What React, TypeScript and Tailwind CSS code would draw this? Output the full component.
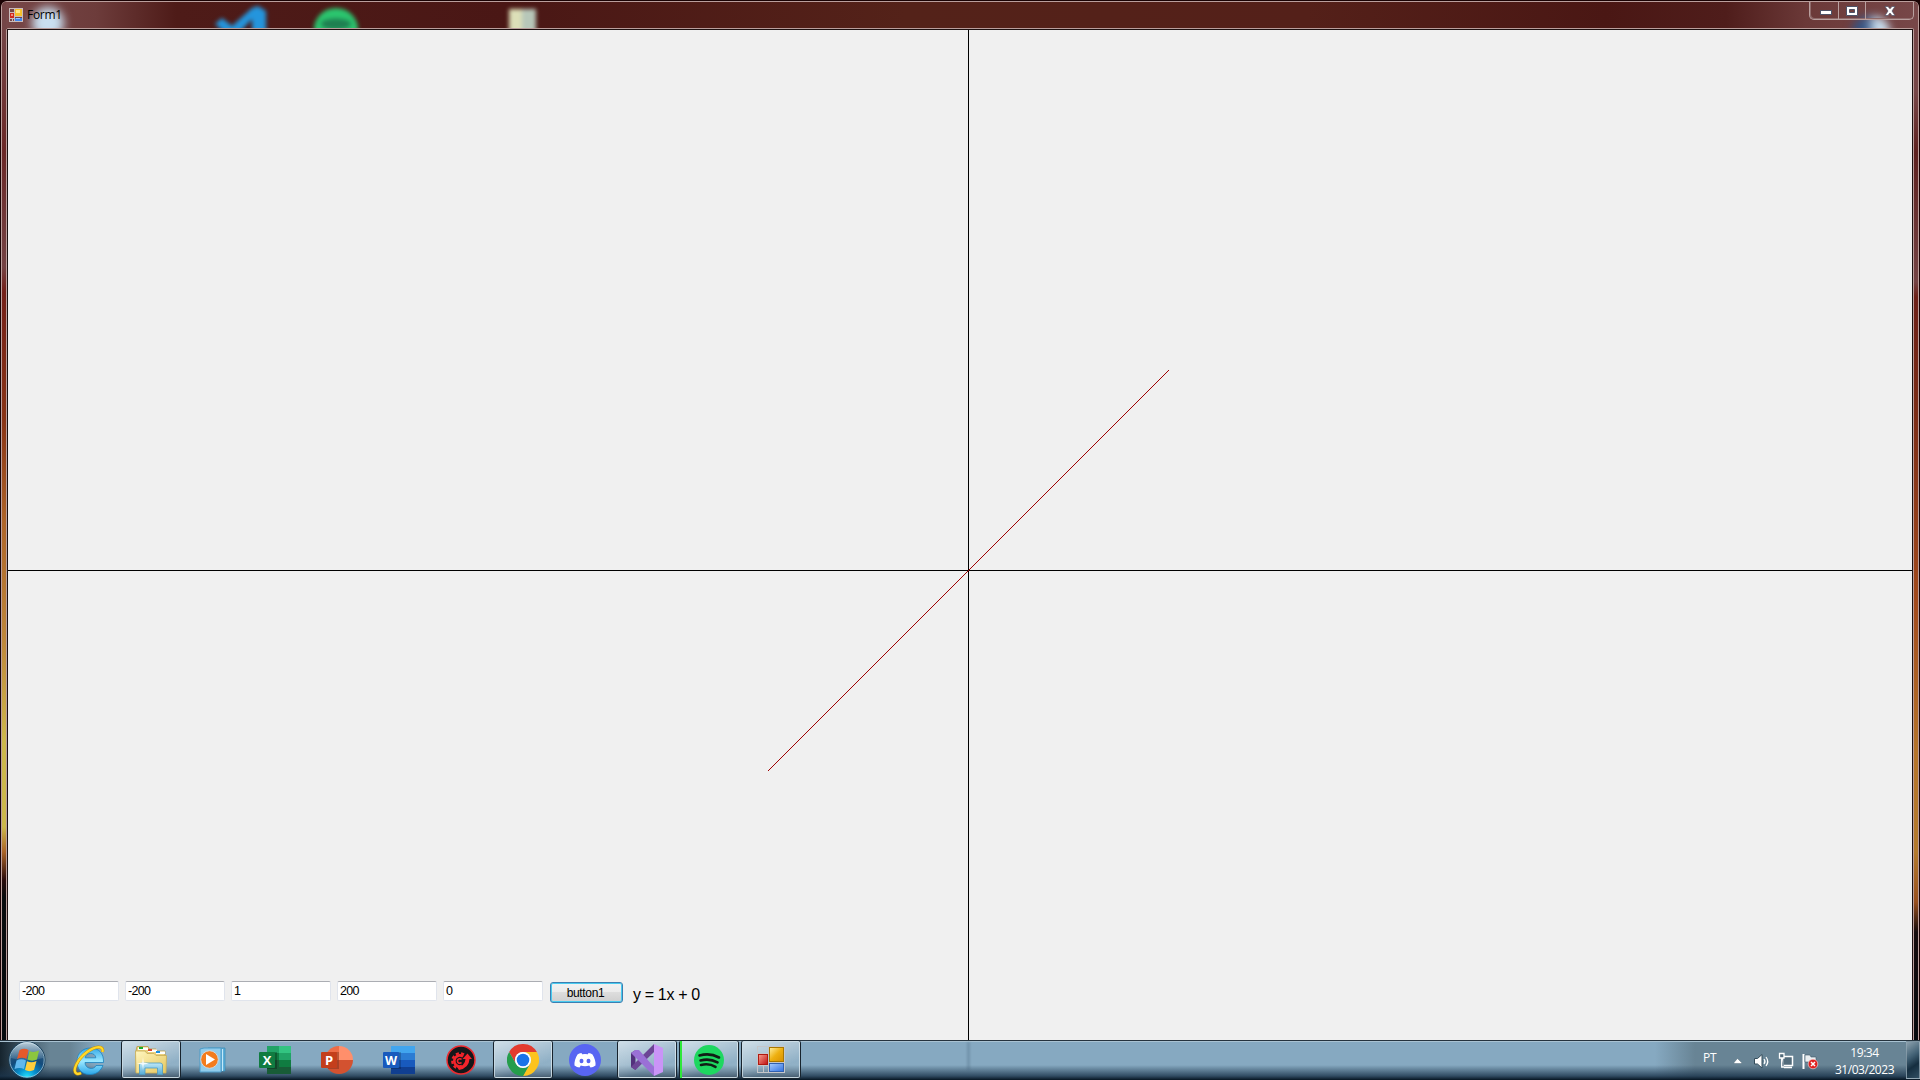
import React from "react";

const S = { fill: "none" } as const;

function Box({ v }: { v: string }) {
  return (
    <div className="h-5 w-[100px] rounded-[2px] border border-[#e0e4ec] border-t-[#abadb3] bg-white pl-[2px] text-[12.5px] leading-[19px] tracking-[-0.65px]">
      <span>{v}</span>
    </div>
  );
}

function FormIcon({ s }: { s: number }) {
  return (
    <svg width={s} height={s} viewBox="0 0 28 28" shapeRendering="crispEdges">
      <defs>
        <linearGradient id="fy" x2="1" y2="1"><stop stopColor="#fff0a0" /><stop offset=".5" stopColor="#eeb010" /><stop offset="1" stopColor="#d89000" /></linearGradient>
        <linearGradient id="fr" x2="1" y2="1"><stop stopColor="#f8a090" /><stop offset="1" stopColor="#c01010" /></linearGradient>
        <linearGradient id="fb" x2="1" y2="1"><stop stopColor="#a8ccff" /><stop offset="1" stopColor="#3070e0" /></linearGradient>
      </defs>
      <path d="M.5 .5H27.5V26.5H.5ZM11.5 0V27M0 7.5H11M0 19.5H11M6 19V27M11 16.5H28" {...S} stroke="#c4c6ca" />
      <rect x="12.5" y="1.5" width="14" height="14" fill="url(#fy)" stroke="#a87800" />
      <rect x="1.5" y="8.5" width="9" height="10" fill="url(#fr)" stroke="#b01810" />
      <rect x="12.5" y="17.5" width="14" height="8" fill="url(#fb)" stroke="#3060b0" />
    </svg>
  );
}

function SmallFormIcon() {
  return (
    <svg width="14" height="14" viewBox="0 0 14 14" shapeRendering="crispEdges">
      <path d="M.5 .5H13.5V13.5H.5ZM5.500 0V14M0 4.500H5M0 10.500H5M3.500 11V14M5 8.500H14" {...S} stroke="#c8bcbc" />
      <rect x="6" y="1" width="7" height="7" fill="#f5c02c" /><rect x="7" y="2" width="4" height="3" fill="#ffe58a" />
      <rect x="1" y="5" width="4" height="5" fill="#d0281c" /><rect x="2" y="6" width="2" height="2" fill="#f09080" />
      <rect x="6" y="10" width="7" height="3" fill="#3f86ec" /><rect x="7" y="10" width="4" height="1" fill="#9cc6ff" />
    </svg>
  );
}

function Start() {
  return (
    <svg width="38" height="38" viewBox="0 0 38 38">
      <defs>
        <radialGradient id="orb" cx=".5" cy=".98" r=".9"><stop stopColor="#25e5ff" /><stop offset=".28" stopColor="#0791cf" /><stop offset=".6" stopColor="#134b7c" /><stop offset="1" stopColor="#385f7c" /></radialGradient>
        <linearGradient id="orbg" x2="0" y2="1"><stop stopColor="#e8f4fa" stopOpacity=".75" /><stop offset="1" stopColor="#a8c8dc" stopOpacity=".15" /></linearGradient>
      </defs>
      <circle cx="19" cy="19" r="18" fill="url(#orb)" stroke="#173e5a" />
      <circle cx="19" cy="19" r="17.2" {...S} stroke="#a9cbdc" strokeOpacity=".75" />
      <path d="M3 17A16 16 0 0 1 35 17Q19 22 3 17Z" fill="url(#orbg)" />
      <path d="M11.500 9.200Q16 6.500 20.500 9L18.500 18Q14 15.500 9 18Z" fill="#e6592a" />
      <path d="M21.500 10Q25.500 12 31 9.500L29 18.500Q24 20.800 19.500 18.500Z" fill="#8cc63f" />
      <path d="M8.500 19.500Q13.500 17 18 19.500L16 28Q11.500 25.800 6.500 28Z" fill="#62b8ee" />
      <path d="M19 20.300Q23.500 22.500 28.500 20L26 29Q21.500 31.300 17 29Z" fill="#ffce3c" />
    </svg>
  );
}

function IE() {
  return (
    <svg width="32" height="32" viewBox="0 0 32 32">
      <defs><linearGradient id="ie" x2="0" y2="1"><stop stopColor="#36a9e6" /><stop offset=".5" stopColor="#9be8ff" /><stop offset="1" stopColor="#2aa5e8" /></linearGradient></defs>
      <path d="M30.500 18.500H12C12 25 21 26.500 23 21.500H30C27 29 21 30.500 16.500 30.500C8.500 30.500 4 25 4 17.500C4 9 10 4 17.500 4C25.500 4 31 9 30.500 18.500ZM12.200 13.800H22.800C22.500 8 12.800 8 12.200 13.800Z" fill="url(#ie)" stroke="#1d83bf" strokeWidth=".8" />
      <path d="M29.500 8C31 1 22 2 14 8C4 15.500 -1 27 3.500 29.500Q5.500 30.500 8 29" {...S} stroke="#c28d08" strokeWidth="3.200" />
      <path d="M29.500 8C31 1 22 2 14 8C4 15.500 -1 27 3.500 29.500Q5.500 30.500 8 29" {...S} stroke="#ffd829" strokeWidth="2.200" />
    </svg>
  );
}

function Explorer() {
  return (
    <svg width="34" height="30" viewBox="0 0 34 30">
      <defs>
        <linearGradient id="fo" x2="1" y2="1"><stop stopColor="#fff6c0" /><stop offset="1" stopColor="#e6c75e" /></linearGradient>
        <linearGradient id="st" x2="0" y2="1"><stop stopColor="#bfe8f8" /><stop offset="1" stopColor="#56acd5" /></linearGradient>
      </defs>
      <path d="M2 6L3 1.500H14L15 4H22L23 6H31V27H2Z" fill="#e8cf7c" stroke="#b99b45" strokeWidth=".8" />
      <path d="M4 2.500H14V5H4ZM14 4.500H23V7H14ZM22 6.500H31V9H22Z" fill="#fff" />
      <path d="M5 2H9V4H5Z" fill="#19ad28" /><path d="M14 4H18V6H14Z" fill="#d8452c" /><path d="M22 6H26V8H22Z" fill="#1b8fe0" />
      <path d="M1.500 6H11L13 8.500H20L22 10.500H32.500L32 28H2Z" fill="url(#fo)" stroke="#c9ad55" strokeWidth=".8" />
      <path d="M5.500 29.500V20Q5.500 18 8 18H26Q28.500 18 28.500 20V29.500H23.500V23H11V29.500Z" fill="url(#st)" stroke="#4c9cc4" strokeWidth=".8" />
      <path d="M9 12L9.700 17.500L15 18.500L9.700 19.500L9 25L8.300 19.500L3 18.500L8.300 17.500Z" fill="#fff" opacity=".9" />
    </svg>
  );
}

function Media() {
  return (
    <svg width="28" height="26" viewBox="0 0 28 26">
      <path d="M9 1H26V24H9Z" fill="#5eafd9" stroke="#3589b5" strokeWidth=".7" />
      <path d="M5 1H22V25H1V2Z" fill="#91cceb" stroke="#4c9cc9" /><path d="M23.500 2V24" stroke="#c4e9f9" />
      <circle cx="10.500" cy="12.500" r="8.800" fill="#f37c1d" stroke="#d1d9dd" /><path d="M7 7L16 12.500L7 18Z" fill="#fff" />
    </svg>
  );
}

function Excel() {
  return (
    <svg width="32" height="28" viewBox="0 0 32 28">
      <path d="M8 0H20V8H8Z" fill="#21a366" /><path d="M20 0H32V7H20Z" fill="#33c481" /><path d="M8 7H20V14H8Z" fill="#107c41" /><path d="M20 7H32V14H20Z" fill="#21a366" /><path d="M8 14H32V28H8Z" fill="#185c37" /><path d="M20 14H32V21H20Z" fill="#107c41" />
      <path d="M8 6H18V23H8Z" fill="#000" opacity=".25" /><rect y="6" width="16" height="16" rx="1" fill="#107c41" />
      <text x="8" y="18.700" textAnchor="middle" fontFamily="Open Sans" fontWeight="700" fontSize="13" fill="#fff">X</text>
    </svg>
  );
}

function Ppt() {
  return (
    <svg width="32" height="28" viewBox="0 0 32 28">
      <path d="M18 0A14 14 0 0 0 4 14H18Z" fill="#ed6c47" /><path d="M18 0A14 14 0 0 1 32 14H18Z" fill="#ff8f6b" /><path d="M4 14A14 14 0 0 0 32 14Z" fill="#d35230" />
      <path d="M7 6H18V23H7Z" fill="#000" opacity=".2" /><rect y="6" width="16" height="16" rx="1" fill="#c43e1c" />
      <text x="8" y="18.700" textAnchor="middle" fontFamily="Open Sans" fontWeight="700" fontSize="13" fill="#fff">P</text>
    </svg>
  );
}

function Word() {
  return (
    <svg width="32" height="28" viewBox="0 0 32 28">
      <path d="M8 0H32V7H8Z" fill="#41a5ee" /><path d="M8 7H32V14H8Z" fill="#2b7cd3" /><path d="M8 14H32V21H8Z" fill="#185abd" /><path d="M8 21H32V28H8Z" fill="#103f91" />
      <path d="M8 6H18V23H8Z" fill="#000" opacity=".2" /><rect y="6" width="16" height="16" rx="1" fill="#185abd" />
      <text x="8" y="18.500" textAnchor="middle" fontFamily="Open Sans" fontWeight="700" fontSize="12.500" fill="#fff">W</text>
    </svg>
  );
}

function Driver() {
  return (
    <svg width="30" height="30" viewBox="0 0 30 30">
      <circle cx="15" cy="15" r="14" fill="#151719" stroke="#ee2b30" strokeWidth="1.500" />
      <path d="M17 11.500A5.500 5.500 0 1 0 16 21" {...S} stroke="#f4242b" strokeWidth="2.600" />
      <path d="M18 9.500A7.700 7.700 0 1 0 12 23.500" {...S} stroke="#f4242b" strokeWidth="2.200" strokeDasharray="3.100 2.200" />
      <path d="M15.500 14.500A2.300 2.300 0 1 0 15.500 17.500" {...S} stroke="#f4242b" strokeWidth="1.600" />
      <path d="M11 22Q19 21 19.500 14H16.500L21.500 8.500L26 14H23.500Q23 23 13 25Z" fill="#f4242b" />
    </svg>
  );
}

function Chrome() {
  return (
    <svg width="32" height="32" viewBox="0 0 32 32">
      <path d="M2.140 8A16 16 0 0 1 29.860 8H16A8 8 0 0 0 9.070 20Z" fill="#e33b2e" />
      <path d="M29.860 8A16 16 0 0 1 16 32L22.930 20A8 8 0 0 0 16 8Z" fill="#fcc31e" />
      <path d="M16 32A16 16 0 0 1 2.140 8L9.070 20A8 8 0 0 0 22.930 20Z" fill="#259d4b" />
      <circle cx="16" cy="16" r="8" fill="#fff" /><circle cx="16" cy="16" r="6.300" fill="#1a73e8" />
    </svg>
  );
}

function Discord() {
  return (
    <svg width="32" height="32" viewBox="0 0 32 32">
      <circle cx="16" cy="16" r="16" fill="#5865f2" />
      <path d="M12.500 9Q10 9.400 8.500 10.400Q5 16 5.500 21.500Q8 23.300 10.500 23.500L11.800 21.500Q16 22.800 20.200 21.500L21.500 23.500Q24 23.300 26.500 21.500Q27 16 23.500 10.400Q22 9.400 19.500 9L18.900 10.200Q16 9.800 13.100 10.200Z" fill="#fff" />
      <ellipse cx="12.500" cy="17" rx="2" ry="2.200" fill="#5865f2" /><ellipse cx="19.500" cy="17" rx="2" ry="2.200" fill="#5865f2" />
    </svg>
  );
}

function VS() {
  return (
    <svg width="33" height="32" viewBox="0 0 33 32">
      <path d="M0 9L4.500 6V26L0 23Z" fill="#52307c" />
      <path d="M0 23L4.500 26L23 8V0Z" fill="#6c4595" />
      <path d="M0 9L4.500 6L8 6L23 23V32Z" fill="#9a70d6" />
      <path d="M23 0L32 4V28L23 32Z" fill="#ca94f7" />
    </svg>
  );
}

function Spotify() {
  return (
    <svg width="30" height="30" viewBox="0 0 30 30">
      <circle cx="15" cy="15" r="15" fill="#1ed760" />
      <path d="M5.500 10.500Q16 7.500 25 12.500M6.500 15.500Q15.500 13 23.500 17.300M7 20Q15 18 21.500 21.800" {...S} stroke="#111c15" strokeWidth="2.600" strokeLinecap="round" />
    </svg>
  );
}

function Task({ active, green, children }: { active?: boolean; green?: boolean; children: React.ReactNode }) {
  return (
    <div className="relative flex h-10 w-[62px] shrink-0 items-center justify-center">
      {active && (
        <div className="absolute left-0 top-0 h-[39px] w-[60px] rounded-[3px] border border-[#17232d]">
          <div className="h-full rounded-[2px] border border-[#d3e2ea]/80 bg-[linear-gradient(160deg,#e0ebf1cc_0%,#c5d6e199_40%,#a4bfd055_70%,#ffffff25_100%)]" />
          {green && <div className="absolute left-0 top-0 h-full w-[2px] bg-[#2ee83a]" />}
        </div>
      )}
      <div className="relative -left-px">{children}</div>
    </div>
  );
}

export default function App() {
  return (
    <div className="flex h-[1080px] w-[1920px] flex-col overflow-hidden bg-black font-['Liberation_Sans',sans-serif] text-black">
      <div className="relative flex h-[1040px] flex-col overflow-hidden bg-[#1a0203] px-px pt-px">
        <div className="relative flex h-[1045px] shrink-0 flex-col rounded-t-[6px] border border-b-0 border-[#ba9e9c] bg-[#4a1816]">
          <div className="flex h-[1040px]">
            <div className="w-1 rounded-tl-[5px] bg-[linear-gradient(180deg,#744546_0px,#744546_30px,#6b2827_150px,#744344_265px,#742019_290px,#8a3516_420px,#ae6529_520px,#bf883b_640px,#cdb84b_740px,#cdb84b_825px,#aa6428_850px,#2a0c0c_878px,#080c0e_895px,#05090c_1040px)]" />
            <div className="flex w-[1908px] flex-col">
              <div className="relative flex h-[26px] items-start overflow-hidden bg-[linear-gradient(90deg,#774748_0px,#6d3c3b_90px,#4e1b18_170px,#4a1715_500px,#542219_900px,#542019_1300px,#4a1714_1600px,#4f1d1b_1720px,#6b3938_1800px,#774748_1908px)]">
                <div className="absolute left-[26px] top-[5px] h-8 w-8 rounded-full bg-[#cadff0] blur-[5px]" />
                <svg className="absolute left-[206px] top-0 blur-[2px]" width="170" height="30" viewBox="0 0 170 30">
                  <path d="M3 22L10 16L20 24L40 6L46 4L54 9V30H12Z" fill="#2495dd" /><path d="M28 30L40 17V30Z" fill="#4a1816" />
                  <ellipse cx="124" cy="27" rx="22" ry="21" fill="#2bc56e" /><ellipse cx="124" cy="22" rx="15" ry="5.500" fill="#1f7f51" />
                </svg>
                <div className="absolute left-[503px] top-[7px] h-8 w-[27px] bg-[linear-gradient(90deg,#dcdfb8_50%,#b7c7b9_50%)] blur-[2px]" />
                <div className="absolute left-[1846px] top-[14px] h-8 w-[38px] rounded-full bg-[linear-gradient(90deg,#365281_35%,#cadff0_65%)] blur-[4px]" />
                <div className="relative left-[3px] top-[6px]"><SmallFormIcon /></div>
                <div className="relative left-[7px] top-[4px] font-['Open_Sans',sans-serif] text-[12px] leading-[17px] tracking-[-0.3px]">Form1</div>
                <div className="absolute left-[1803px] top-0 flex h-[18px] w-[105px] rounded-b-[5px] border border-t-0 border-[#b9a09f] shadow-[inset_1px_-1px_0_#8e6a6a] [&>div]:flex [&>div]:items-center [&>div]:justify-center">
                  <div className="w-[29px] border-r border-[#b9a09f]"><svg className="relative left-[2px] top-px" width="12" height="6"><rect x=".5" y="1.500" width="11" height="4" fill="#fff" stroke="#4e5267" /></svg></div>
                  <div className="w-[27px] border-r border-[#b9a09f]"><svg width="12" height="10"><path fillRule="evenodd" d="M.5 .5H11.500V9.500H.5ZM3.500 3.500V6.500H8.500V3.500Z" fill="#fff" stroke="#4e5267" /></svg></div>
                  <div className="flex-1"><svg width="12" height="10"><path d="M1 .5H4L6 2.800L8 .5H11L8 5L11 9.500H8L6 7L4 9.500H1L4 5Z" fill="#fff" stroke="#4e5267" strokeWidth=".7" /></svg></div>
                </div>
              </div>
              <div className="flex h-[1013px] flex-col rounded-t-[2px] border border-b-0 border-[#ba9e9c]">
                <div className="relative h-[1013px] w-[1906px] border border-b-0 border-[#1b1010] bg-[#f0f0f0]">
                  <svg className="block" width="1904" height="1010" viewBox="8 30 1904 1010">
                    <path d="M968.500 30V1040M8 570.500H1912" stroke="#000" shapeRendering="crispEdges" />
                    <path d="M768 771L1169 370" stroke="#a00000" shapeRendering="crispEdges" />
                  </svg>
                  <div className="absolute left-[11px] top-[951px] flex gap-[6px]">
                    <Box v="-200" /><Box v="-200" /><Box v="1" /><Box v="200" /><Box v="0" />
                    <div className="ml-[1px] mt-px flex h-[21px] w-[73px] items-center justify-center rounded-[3px] border border-[#3c7fb1] bg-[linear-gradient(180deg,#f2f2f2_0%,#ebebeb_48%,#dddddd_50%,#cfcfcf_100%)] pr-[2px] pt-px text-[12px] tracking-[-0.35px] shadow-[inset_0_0_0_1px_#48cbf0]">button1</div>
                    <div className="ml-[4px] mt-[3px] whitespace-nowrap text-[16px] leading-[22px] tracking-[-0.35px]">y = 1x + 0</div>
                  </div>
                </div>
              </div>
            </div>
            <div className="w-1 rounded-tr-[5px] bg-[linear-gradient(180deg,#774748_0px,#774748_90px,#5e211f_150px,#744344_280px,#6d2018_295px,#7a2b17_400px,#a24a1d_600px,#b4742b_750px,#b37a2d_850px,#99501f_900px,#160b0c_930px,#05090c_1040px)]" />
          </div>
        </div>
      </div>

      <div className="relative flex h-10 shrink-0 bg-[linear-gradient(180deg,#25333e_0,#25333e_1px,#b6cedc_1px,#9bb6c8_2px,transparent_2px,transparent_25px,#1b344bcc_36px,#061522_40px),linear-gradient(90deg,#16242e_0px,#405868_25px,#688495_50px,#688495_70px,#86a9c1_98px,#86a9c1_1655px,#688495_1695px,#688495_1920px)]">
        <div className="flex w-[59px] items-center pl-[8px]"><Start /></div>
        <Task><IE /></Task>
        <Task active><Explorer /></Task>
        <Task><Media /></Task>
        <Task><Excel /></Task>
        <Task><Ppt /></Task>
        <Task><Word /></Task>
        <Task><Driver /></Task>
        <Task active><Chrome /></Task>
        <Task><Discord /></Task>
        <Task active><VS /></Task>
        <Task active green><Spotify /></Task>
        <Task active><FormIcon s={28} /></Task>
        <div className="absolute left-[967px] top-[2px] h-7 w-[3px] bg-[#46657c]/30 blur-[1px]" />
        <div className="ml-auto flex font-['Open_Sans',sans-serif] text-[12px] text-white">
          <div className="w-[31px] pt-[9px] leading-[17px] tracking-[-0.3px]">PT</div>
          <svg className="mt-[9px]" width="86" height="24" viewBox="1734 1049 86 24">
            <path d="M1734 1063.500V1062.500L1737.500 1058.500L1741.500 1062.500V1063.500Z" fill="#fff" stroke="#425c6c" strokeWidth=".4" />
            <path d="M1754.500 1058.500H1757.500L1762 1054.500V1068L1757.500 1064H1754.500Z" fill="#fff" stroke="#344c5b" /><path d="M1764 1059Q1766 1061.500 1764 1064M1766 1057Q1769.500 1061.500 1766 1066" {...S} stroke="#fff" strokeWidth="1.200" />
            <path d="M1782.500 1056.500H1792.500V1065.500H1782.500ZM1784 1067.500H1792" fill="#526b7b" stroke="#fff" strokeWidth="1.500" /><path d="M1779.500 1053.500H1784V1058H1779.500ZM1781.700 1058V1067H1784" fill="#526b7b" stroke="#fff" strokeWidth="1.300" />
            <path d="M1803.500 1054V1069" stroke="#fff" strokeWidth="2" /><path d="M1805 1055H1810L1811 1057H1816V1064H1811L1810 1062H1805Z" fill="#e9eef1" stroke="#3f5868" strokeWidth=".6" />
            <circle cx="1813" cy="1064" r="4.800" fill="#e02020" stroke="#fff" strokeWidth=".5" /><path d="M1811 1062L1815 1066M1815 1062L1811 1066" stroke="#fff" strokeWidth="1.500" />
          </svg>
          <div className="ml-[9px] mr-[7px] w-[70px] pl-px pt-[4px] text-center leading-[17px] tracking-[-0.45px]"><div>19:34</div><div className="whitespace-nowrap">31/03/2023</div></div>
          <div className="mt-px h-[38px] w-[14px] border border-[#a1b4bf]/70 bg-[linear-gradient(145deg,#8ba0ad_0%,#405f73_40%,#152e40_65%,#314f63_100%)]" />
        </div>
      </div>
    </div>
  );
}
